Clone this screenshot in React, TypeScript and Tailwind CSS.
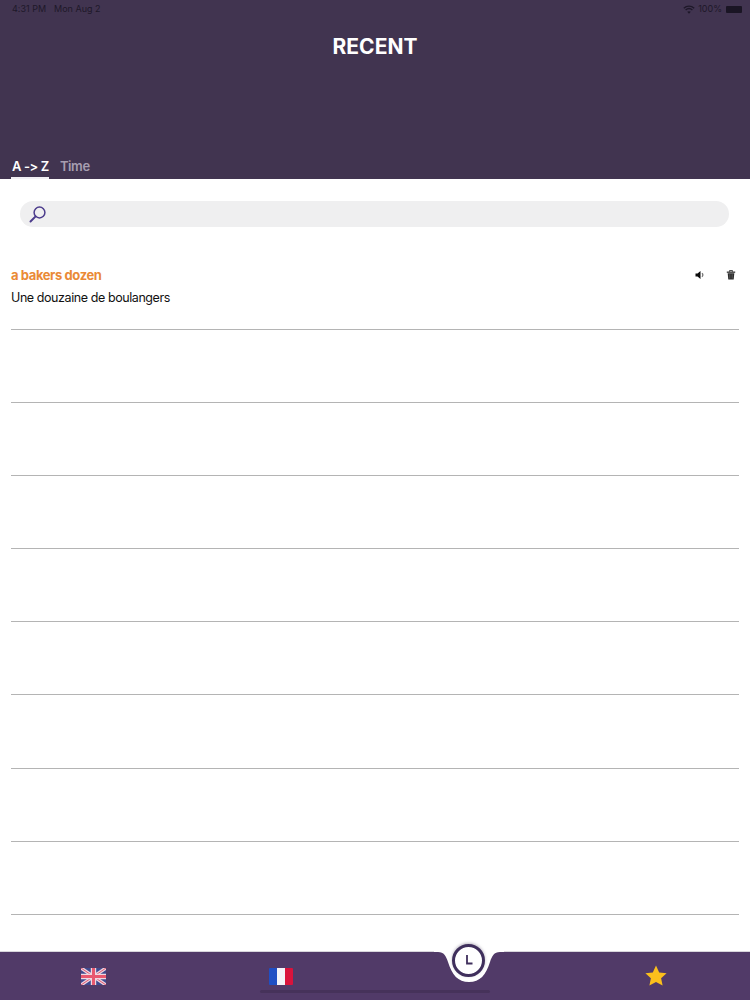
import React from "react";

const lines = Array.from({ length: 8 });

function UKFlag() {
  return (
    <svg width="25" height="17" viewBox="0 0 25 17">
      <rect width="25" height="17" fill="#3f4a8f" />
      <path d="M0 0L25 17M25 0L0 17" stroke="#ecd3de" strokeWidth="3.4" />
      <path d="M0 0L25 17M25 0L0 17" stroke="#e0566f" strokeWidth="1" />
      <path d="M12.5 0V17M0 8.5H25" stroke="#eed9e2" strokeWidth="5.4" />
      <path d="M12.5 0V17M0 8.5H25" stroke="#e8586f" strokeWidth="3" />
    </svg>
  );
}

function FRFlag() {
  return (
    <div className="flex h-[17px] w-[24px] overflow-hidden rounded-[1px]">
      <div className="flex-1 bg-[#1f4fc4]" />
      <div className="flex-1 bg-[#f3f3f8]" />
      <div className="flex-1 bg-[#d9133c]" />
    </div>
  );
}

export default function App() {
  return (
    <div className="relative flex h-[1000px] w-[750px] flex-col overflow-hidden bg-white font-['Inter','Liberation_Sans',sans-serif] [font-feature-settings:'calt'_0]">
      <header className="flex h-[179px] flex-col bg-[#413450]">
        <div className="flex h-[18px] items-center justify-between pl-3 pr-[8px] text-[9px] text-[#1e1829]">
          <div className="flex gap-[8px]">
            <span>4:31 PM</span>
            <span>Mon Aug 2</span>
          </div>
          <div className="flex items-center gap-[3px]">
            <svg width="12" height="9" viewBox="0 0 12 9" fill="none" stroke="#1e1829" strokeWidth="1.4">
              <path d="M0.8 3.2C3.8 0.4 8.2 0.4 11.2 3.2" />
              <path d="M2.6 5C4.6 3.2 7.4 3.2 9.4 5" />
              <path d="M6 8.8L4.2 6.8C5.2 6 6.8 6 7.8 6.8Z" fill="#1e1829" stroke="none" />
            </svg>
            <span>100%</span>
            <div className="ml-[1px] h-[7px] w-[16px] rounded-[1px] bg-[#1a1524]" />
          </div>
        </div>
        <h1 className="mt-[15px] text-center text-[21px] leading-[28px] font-bold text-white">RECENT</h1>
        <div className="mt-auto flex gap-[11px] pl-[11px] text-[13px] leading-[17px] font-semibold tracking-[-0.4px]">
          <div className="border-b-2 border-[#f2f0f5] pb-[2px] pl-[1px] text-white">A -&gt; Z</div>
          <div className="text-[#a79eb0]">Time</div>
        </div>
      </header>

      <main className="flex flex-1 flex-col px-[11px]">
        <div className="mr-[10px] ml-[9px] mt-[22px] flex h-[26px] items-center rounded-full bg-[#efeff0] pl-[9px]">
          <svg width="17" height="17" viewBox="0 0 17 17" fill="none" stroke="#4c3c8c" strokeWidth="1.5">
            <circle cx="10.5" cy="6.5" r="5.4" />
            <path d="M6.6 10.4L1.5 15.5" strokeWidth="2" strokeLinecap="round" />
          </svg>
        </div>

        <div className="mt-[39px] flex h-[64px] justify-between border-b border-[#b4b4b4]">
          <div>
            <div className="text-[13px] leading-[18px] font-bold tracking-[-0.4px] text-[#ea8a36]">a bakers dozen</div>
            <div className="mt-[5px] text-[12.5px] leading-[18px] tracking-[-0.42px] text-[#111111]">Une douzaine de boulangers</div>
          </div>
          <div className="flex h-[18px] items-center gap-[21px] pr-[3px]">
            <svg width="10" height="10" viewBox="0 0 10 10">
              <path d="M0.5 3.5H2.5L5.5 1V9L2.5 6.5H0.5Z" fill="#0c0c0c" />
              <path d="M7 3.2C8 4.2 8 5.8 7 6.8" fill="none" stroke="#777" strokeWidth="1.2" />
            </svg>
            <svg width="10" height="10" viewBox="0 0 10 10">
              <path d="M0.8 1.6H9.2V2.7H0.8Z" fill="#0c0c0c" />
              <path d="M3.5 1.6V0.6H6.5V1.6" fill="none" stroke="#0c0c0c" strokeWidth="0.8" />
              <path d="M1.7 3.2H8.3L7.7 9.6H2.3Z" fill="#2a2a2a" />
              <path d="M3.8 4.2V8.6M6.2 4.2V8.6" stroke="#777" strokeWidth="0.6" />
            </svg>
          </div>
        </div>

        {lines.map((_, i) => (
          <div key={i} className="h-[73.1px] shrink-0 border-b border-[#b4b4b4]" />
        ))}
      </main>

      <nav className="relative grid h-[49px] grid-cols-4 items-center border-t border-[#d8d6dc] bg-[#513a68]">
        <div className="flex justify-center">
          <UKFlag />
        </div>
        <div className="flex justify-center">
          <FRFlag />
        </div>
        <div />
        <div className="flex justify-center">
          <svg width="24" height="24" viewBox="0 0 24 24">
            <path d="M12 1.5L15.2 8.4L22.6 9.2L17.1 14.2L18.6 21.6L12 17.9L5.4 21.6L6.9 14.2L1.4 9.2L8.8 8.4Z" fill="#fbbf1c" />
          </svg>
        </div>
        <svg className="absolute left-[434px] -top-[1px]" width="70" height="34" viewBox="0 0 70 34">
          <path d="M0 0H70V1H66C60 1 58 5 56 11C52 24 46 31 35 31C24 31 18 24 14 11C12 5 10 1 4 1H0Z" fill="#ffffff" />
        </svg>
        <div className="absolute left-[452px] -top-[8px] flex h-[33px] w-[33px] items-center justify-center rounded-full border-[3px] border-[#3f2f5c] bg-white shadow-[0_-1px_3px_rgba(60,50,80,0.35)]">
          <svg width="15" height="15" viewBox="0 0 15 15" fill="none" stroke="#3f2f5c" strokeWidth="1.8">
            <path d="M6 2V10.5H11.5" />
          </svg>
        </div>
        <div className="absolute bottom-[7px] left-[260px] h-[3px] w-[230px] rounded-full bg-[#46325a]" />
      </nav>
    </div>
  );
}
